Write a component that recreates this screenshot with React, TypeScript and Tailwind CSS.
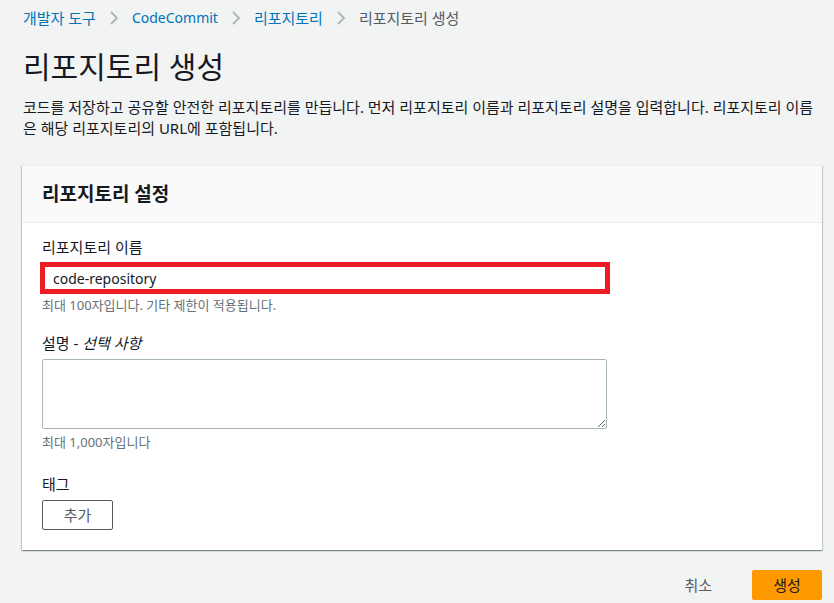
import React from "react";

function Chevron() {
  return (
    <svg width="10" height="16" viewBox="0 0 10 16" className="mx-[13px]" aria-hidden>
      <path d="M2 2 L8 8 L2 14" fill="none" stroke="#aab7b8" strokeWidth="1.8" />
    </svg>
  );
}

export default function App() {
  return (
    <div
      className="min-h-[603px] w-[834px] bg-[#f2f3f3] text-[#16191f] px-[22px] pt-[8px]"
      style={{ fontFamily: '"Noto Sans", "Noto Sans CJK KR", sans-serif' }}
    >
      <nav className="flex items-center h-[20px] text-[15px] leading-[20px] pl-px">
        <span className="text-[#0073bb]">개발자 도구</span>
        <Chevron />
        <span className="text-[#0073bb] text-[14px]">CodeCommit</span>
        <Chevron />
        <span className="text-[#0073bb]">리포지토리</span>
        <Chevron />
        <span className="text-[#545b64]">리포지토리 생성</span>
      </nav>

      <h1 className="mt-[20px] text-[30px] leading-[38px] font-normal pl-px">리포지토리 생성</h1>

      <p className="mt-[11px] mr-[-12px] text-[15px] leading-[21px] pl-px">
        코드를 저장하고 공유할 안전한 리포지토리를 만듭니다. 먼저 리포지토리 이름과 리포지토리 설명을 입력합니다. 리포지토리 이름은 해당 리포지토리의 URL에 포함됩니다.
      </p>

      <section className="mt-[26px] w-[800px] bg-white border-t border-[#eaeded] shadow-[0_1px_1px_0_rgba(0,28,36,0.3),1px_1px_1px_0_rgba(0,28,36,0.15),-1px_1px_1px_0_rgba(0,28,36,0.15)]">
        <header className="h-[57px] bg-[#fafafa] border-b border-[#eaeded] flex items-center px-[20px]">
          <h2 className="text-[19px] font-bold leading-[24px]">리포지토리 설정</h2>
        </header>

        <div className="px-[20px] pt-[14px] pb-[20px]">
          <label className="block text-[15px] leading-[20px]">리포지토리 이름</label>
          <div className="mt-[5px] ml-[-2px] w-[570px] h-[32px] border-[5px] border-[#ed1c24] bg-white flex items-center pl-[8px] text-[14px]">
            code-repository
          </div>
          <p className="mt-[3px] text-[13px] leading-[16px] text-[#687078]">최대 100자입니다. 기타 제한이 적용됩니다.</p>

          <label className="block mt-[20px] text-[15px] leading-[20px]">
            설명 - <i>선택 사항</i>
          </label>
          <textarea className="block mt-[6px] w-[565px] h-[70px] border border-[#aab7b8] rounded-[2px] bg-white" />
          <p className="mt-[5px] text-[13px] leading-[16px] text-[#687078]">최대 1,000자입니다</p>

          <label className="block mt-[24px] text-[15px] leading-[20px]">태그</label>
          <button className="mt-[6px] w-[71px] h-[30px] border border-[#545b64] rounded-[2px] bg-white text-[15px] text-[#545b64]">
            추가
          </button>
        </div>
      </section>

      <div className="mt-[20px] w-[800px] flex justify-end items-center">
        <button className="text-[15px] text-[#545b64] mr-[40px]">취소</button>
        <button className="w-[70px] h-[30px] bg-[#ff9900] rounded-[2px] text-[15px] text-[#16191f]">생성</button>
      </div>
    </div>
  );
}
